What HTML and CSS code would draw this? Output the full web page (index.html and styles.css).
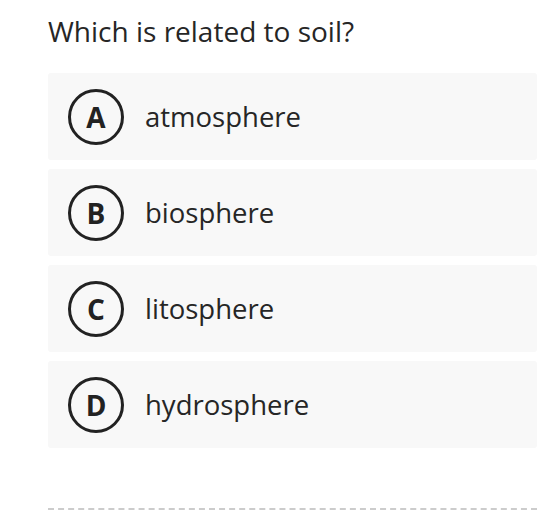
FILE: index.html
```html
<!DOCTYPE html>
<html>
<head>
<meta charset="utf-8">
<link rel="stylesheet" href="styles.css">
</head>
<body>
<div class="quiz">
  <h1 class="question">Which is related to soil?</h1>
  <div class="options">
    <div class="option"><span class="letter">A</span><span class="label">atmosphere</span></div>
    <div class="option"><span class="letter">B</span><span class="label">biosphere</span></div>
    <div class="option"><span class="letter">C</span><span class="label">litosphere</span></div>
    <div class="option"><span class="letter">D</span><span class="label">hydrosphere</span></div>
  </div>
  <div class="divider"></div>
</div>
</body>
</html>
```
FILE: styles.css
```css
html, body {
  margin: 0;
  padding: 0;
  background: #ffffff;
}
body {
  font-family: "Open Sans", "Noto Sans", sans-serif;
  color: #222222;
  overflow: hidden;
}
.quiz {
  padding: 12px 0 0 48px;
}
.question {
  margin: 0;
  font-size: 28px;
  font-weight: 400;
  line-height: 38px;
  color: #262626;
}
.options {
  margin-top: 23px;
  display: flex;
  flex-direction: column;
  gap: 9px;
  width: 489px;
}
.option {
  height: 87px;
  background: #f8f8f8;
  border-radius: 3px;
  display: flex;
  align-items: center;
  padding-left: 20px;
}
.letter {
  width: 50px;
  height: 50px;
  border: 3px solid #222222;
  border-radius: 50%;
  display: flex;
  align-items: center;
  justify-content: center;
  font-size: 28px;
  font-weight: 700;
  line-height: 1;
  flex: none;
}
.label {
  margin-left: 21px;
  font-size: 27.5px;
  color: #262626;
}
.divider {
  margin-top: 60px;
  border-top: 2px dashed #cccccc;
  width: 489px;
}
```
